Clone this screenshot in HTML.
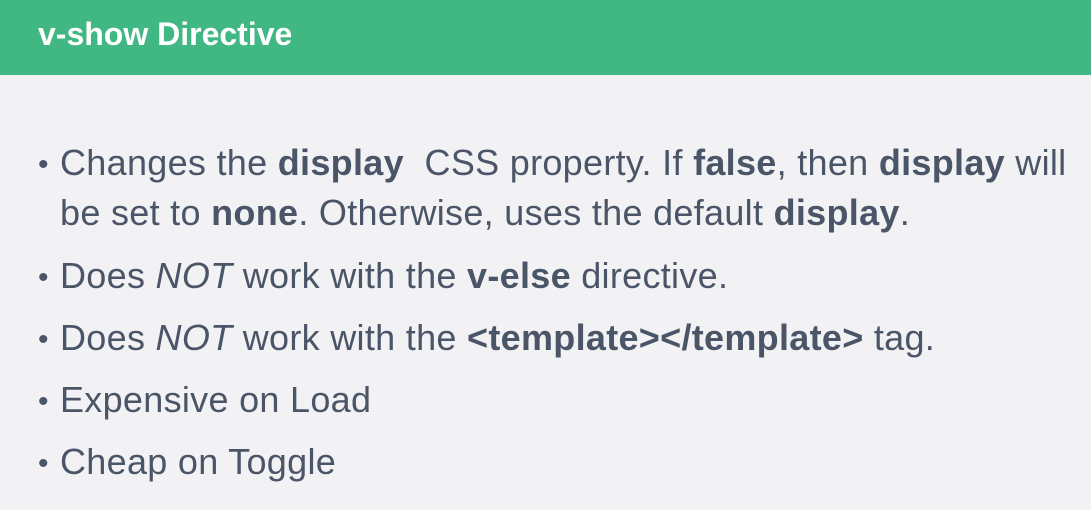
<!DOCTYPE html>
<html><head><style>
body{margin:0;width:1091px;height:510px;background:#f2f2f4;overflow:hidden;font-family:"Liberation Sans",sans-serif;}
.h{height:75px;background:#41b883;color:#fff;font-weight:bold;font-size:32px;}
.h span{position:absolute;left:38px;top:16px;}
.l{position:absolute;left:60px;color:#4b5568;font-size:36px;letter-spacing:0.3px;white-space:nowrap;}
.l.b::before{content:"•";position:absolute;left:-22px;font-size:30px;top:6px;}
b{color:#4b5568;}
</style></head><body>
<div class="h"><span>v-show Directive</span></div>
<div class="l b" style="top:142px">Changes the <b>display</b>&nbsp; CSS property. If <b>false</b>, then <b>display</b> will</div>
<div class="l" style="top:192px">be set to <b>none</b>. Otherwise, uses the default <b>display</b>.</div>
<div class="l b" style="top:255px">Does <i>NOT</i> work with the <b>v-else</b> directive.</div>
<div class="l b" style="top:317px">Does <i>NOT</i> work with the <b>&lt;template&gt;&lt;/template&gt;</b> tag.</div>
<div class="l b" style="top:379px">Expensive on Load</div>
<div class="l b" style="top:441px">Cheap on Toggle</div>
</body></html>
